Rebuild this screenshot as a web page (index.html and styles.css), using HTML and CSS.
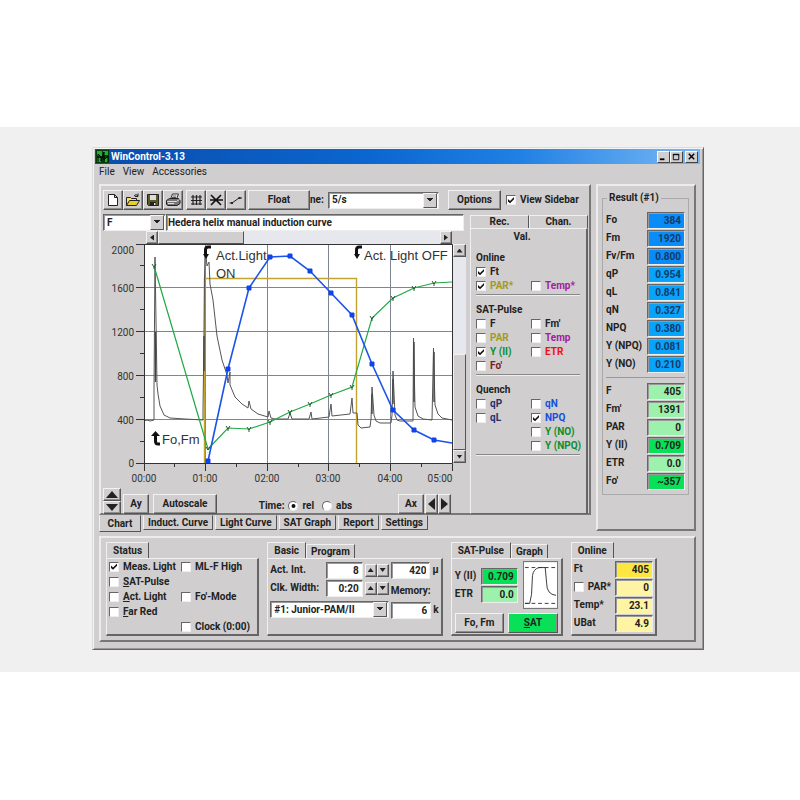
FILE: index.html
```
<!DOCTYPE html>
<html lang="en">
<head>
    <meta charset="UTF-8">
    <meta name="viewport" content="width=device-width, initial-scale=1.0">
    <title>WinControl-3.13</title>
    <link rel="stylesheet" href="styles.css">
</head>
<body>
<main class="stage">
<div class="window">
    <header class="titlebar">
        <svg class="app-icon" viewBox="0 0 13 13"><rect width="13" height="13" fill="#063b10"/><path d="M1 1h5v5h-5zM7 1h5v4h-5zM1 8h4v4h-4zM9 8h3v4h-3z" fill="#18b52c"/><path d="M2 12V4l3 3v4l3-9v8l4-4v6" fill="none" stroke="#000"/></svg>
        <h1>WinControl-3.13</h1>
        <div class="win-buttons">
            <button type="button" aria-label="Minimize"><svg viewBox="0 0 12 11"><path d="M2 8h5" stroke="#000" stroke-width="2"/></svg></button>
            <button type="button" aria-label="Maximize"><svg viewBox="0 0 12 11"><path d="M2.500 2.500h6v6h-6zM2 3h7" fill="none" stroke="#000"/></svg></button>
            <button type="button" aria-label="Close"><svg viewBox="0 0 12 11"><path d="M3 2l6 6M9 2l-6 6" stroke="#000" stroke-width="1.600"/></svg></button>
        </div>
    </header>
    <nav class="menu">
        <a href="#">File</a><a href="#">View</a><a href="#">Accessories</a>
    </nav>

    <div class="upper">
        <div class="main-col">
            <section class="panel chart-panel">
                <div class="toolbar">
                    <div class="tool-group">
                        <button type="button" class="tool" aria-label="New"><svg viewBox="0 0 16 16"><path d="M3.500 2.500h6l3 3v8h-9zM9.500 2.500v3h3" fill="#fff" stroke="#222"/></svg></button>
                        <button type="button" class="tool" aria-label="Open"><svg viewBox="0 0 16 16"><path d="M1.500 13.500v-8h4l1 1h5v2" fill="#f4e36b" stroke="#222"/><path d="M1.500 13.500l3-5h10l-3 5z" fill="#e8cf28" stroke="#222"/><path d="M9 4q2-3 4 0M13 1.500V4.500h-3" fill="none" stroke="#222"/></svg></button>
                        <button type="button" class="tool" aria-label="Save"><svg viewBox="0 0 16 16"><path d="M2.500 2.500h11v11h-10l-1-1z" fill="#5b5a28" stroke="#222"/><path d="M5 3h6v5h-6z" fill="#ddd"/><path d="M5 10h6v4h-6z" fill="#222"/><path d="M9 11h1.500v2H9z" fill="#ddd"/></svg></button>
                        <button type="button" class="tool" aria-label="Print"><svg viewBox="0 0 16 16"><path d="M5.500 7l2-5h6l-2 5" fill="#fff" stroke="#333"/><path d="M7.500 4h4M7 5.500h4" stroke="#555"/><path d="M1.500 8.500l3-2h9l1.500 2v3l-3 2h-9l-1.500-1z" fill="#777" stroke="#222"/><path d="M2 9.500h9.500l3-2M3 11.500h6" fill="none" stroke="#ddd"/></svg></button>
                    </div>
                    <div class="tool-group">
                        <button type="button" class="tool" aria-label="Grid"><svg viewBox="0 0 16 16"><path d="M5 3v10M8.500 3v10M12 3v10M3 5h11M3 8.500h11M3 12h11" stroke="#222" stroke-width="1.200"/></svg></button>
                        <button type="button" class="tool" aria-label="Markers"><svg viewBox="0 0 16 16"><path d="M2 8h13M3 3l5 5 5-5M3 13l5-5 5 5" fill="none" stroke="#111" stroke-width="1.600"/></svg></button>
                        <button type="button" class="tool" aria-label="Line"><svg viewBox="0 0 16 16"><path d="M1.500 11h2.500l7-5h3" fill="none" stroke="#222"/><path d="M3 10h2v2h-2zM10.500 5h2v2h-2z" fill="#222"/></svg></button>
                    </div>
                    <button type="button" class="btn float">Float</button>
                    <label class="rate-label" for="rate">ne:</label>
                    <span class="drop rate"><select id="rate"><option>5/s</option></select></span>
                    <button type="button" class="btn options">Options</button>
                    <label class="check"><input type="checkbox" checked>View Sidebar</label>
                </div>

                <div class="work">
                    <div class="chart-col">
                        <div class="comment-row">
                            <span class="drop"><select aria-label="Record"><option>F</option></select></span>
                            <input type="text" class="field comment" aria-label="Comment" value="Hedera helix manual induction curve">
                        </div>
                        <div class="hscroll">
                            <button type="button" class="arrow left" aria-label="Scroll left"></button>
                            <span class="thumb"></span>
                            <button type="button" class="arrow right" aria-label="Scroll right"></button>
                        </div>
                        <div class="plot-row">
                            <svg class="plot" viewBox="-41 0 350 243" role="img" aria-label="Induction curve">
                                <rect width="308" height="219" fill="#fff"/>
                                <path class="grid" d="M0 43.500h308M0 87.500h308M0 131.500h308M0 175.500h308M61.500 0v219M123.500 0v219M184.500 0v219M246.500 0v219"/>
                                <path class="actlight" d="M60.500 219V34.500H212.500V219"/>
                                <path class="ft" d="M0 177l3-1 3 1 4-1V144L11 13 13 141 14 150 16 162 20 171 26 174 41 175 59 176V166L60 92 60.500 34 61 8 62 12 63 22 65 18 66 40 69 56 73 92 78 116 83 131 84 139 86 128 86 141 91 153 98 160 104 164 105 157 107 165 114 170 124 173 125 167 127 174 131 175H144L146 169 148 175H165L167 168 168 175 185 173 187 160 188 172 206 170 208 154 209 169H213L214 181 217 184 226 183 227 175 228 143 230 171 232 177 236 179H247L248 171 249 127 251 171 253 176 256 177H269L269.500 94 271 163 274 172 279 175 288 176 289.500 104 291 161 294 170 298 174 308 176"/>
                                <path class="spikes" d="M11.500 88v50M60 92v35M228 150v20M249 135v25M270 98v60M290 108v50"/>
                                <path class="y2" d="M10 22L64 205 84 184 105 185 126 178 146 168 166 160 187 151 208 143 228 74 249 54 270 44 290 39 308 38"/>
                                <path class="y2-marks" d="M82 182l2 3 2-3M84 185v2M103 183l2 3 2-3M105 186v2M124 176l2 3 2-3M126 179v2M144 166l2 3 2-3M146 169v2M164 158l2 3 2-3M166 161v2M185 149l2 3 2-3M187 152v2M206 141l2 3 2-3M208 144v2M226 72l2 3 2-3M228 75v2M247 52l2 3 2-3M249 55v2M268 42l2 3 2-3M270 45v2M288 37l2 3 2-3M290 40v2M8 20l2 3 2-3M10 23v2M62 203l2 3 2-3"/>
                                <path class="npq" d="M64 217L84 125 105 44 126 13 146 12 166 27 187 49 208 71 228 120 249 166 270 186 290 196 308 199"/>
                                <path class="npq-marks" d="M62 215h4v4h-4zM82 123h4v4h-4zM103 42h4v4h-4zM124 11h4v4h-4zM144 10h4v4h-4zM164 25h4v4h-4zM185 47h4v4h-4zM206 69h4v4h-4zM226 118h4v4h-4zM247 164h4v4h-4zM268 184h4v4h-4zM288 194h4v4h-4z"/>
                                <path class="axis" d="M-8 .500H308.500V219M.500 0V227M-8 219.500H308.500V227M-8 43.500H0M-8 87.500H0M-8 131.500H0M-8 175.500H0M-4 21.500H0M-4 65.500H0M-4 109.500H0M-4 153.500H0M-4 197.500H0M61.500 219v8M123.500 219v8M184.500 219v8M246.500 219v8M30.500 219v4M92.500 219v4M154.500 219v4M215.500 219v4M277.500 219v4"/>
                                <g class="y-labels">
                                    <text x="-10" y="10">2000</text><text x="-10" y="48">1600</text><text x="-10" y="92">1200</text><text x="-10" y="136">800</text><text x="-10" y="180">400</text><text x="-10" y="223">0</text>
                                </g>
                                <g class="x-labels">
                                    <text x="0" y="238">00:00</text><text x="61" y="238">01:00</text><text x="123" y="238">02:00</text><text x="184" y="238">03:00</text><text x="246" y="238">04:00</text><text x="296" y="238">05:00</text>
                                </g>
                                <g class="notes">
                                    <text x="72" y="16">Act.Light</text><text x="72" y="34">ON</text><text x="220" y="16">Act. Light OFF</text><text x="18" y="200">Fo,Fm</text>
                                </g>
                                <g class="note-arrows">
                                    <path d="M67 3h-3q-2.500 0-2.500 3v6"/><path d="M59 10h6l-3 5z"/>
                                    <path d="M218 3h-3q-2.500 0-2.500 3v6"/><path d="M210 10h6l-3 5z"/>
                                    <path d="M16 200h-2q-2.500 0-2.500-3v-6"/><path d="M7 192h9l-4.500-5z"/>
                                </g>
                            </svg>
                            <div class="vscroll">
                                <button type="button" class="arrow up" aria-label="Scroll up"></button>
                                <span class="thumb"></span>
                                <button type="button" class="arrow down" aria-label="Scroll down"></button>
                            </div>
                        </div>
                        <div class="axis-row">
                            <div class="spin-big">
                                <button type="button" class="arrow up" aria-label="Y up"></button>
                                <button type="button" class="arrow down" aria-label="Y down"></button>
                            </div>
                            <button type="button" class="btn ay">Ay</button>
                            <button type="button" class="btn autoscale">Autoscale</button>
                            <div class="time">
                                <span>Time:</span>
                                <label class="check"><input type="radio" name="time" checked>rel</label>
                                <label class="check"><input type="radio" name="time">abs</label>
                            </div>
                            <button type="button" class="btn ax">Ax</button>
                            <button type="button" class="arrow big left" aria-label="X left"></button>
                            <button type="button" class="arrow big right" aria-label="X right"></button>
                        </div>
                    </div>

                    <aside class="sidebar">
                        <div class="side-tabs"><button type="button">Rec.</button><button type="button">Chan.</button></div>
                        <div class="side-body">
                            <h2 class="side-title">Val.</h2>
                            <section class="side-group">
                                <h3>Online</h3>
                                <div class="opts">
                                    <label class="check"><input type="checkbox" checked>Ft</label><span></span>
                                    <label class="check olive"><input type="checkbox" checked>PAR*</label>
                                    <label class="check purple"><input type="checkbox">Temp*</label>
                                </div>
                            </section>
                            <section class="side-group">
                                <h3>SAT-Pulse</h3>
                                <div class="opts">
                                    <label class="check"><input type="checkbox">F</label>
                                    <label class="check"><input type="checkbox">Fm'</label>
                                    <label class="check olive"><input type="checkbox">PAR</label>
                                    <label class="check purple"><input type="checkbox">Temp</label>
                                    <label class="check green"><input type="checkbox" checked>Y (II)</label>
                                    <label class="check red"><input type="checkbox">ETR</label>
                                    <label class="check maroon"><input type="checkbox">Fo'</label>
                                </div>
                            </section>
                            <section class="side-group">
                                <h3>Quench</h3>
                                <div class="opts">
                                    <label class="check navy"><input type="checkbox">qP</label>
                                    <label class="check blue"><input type="checkbox">qN</label>
                                    <label class="check navy"><input type="checkbox">qL</label>
                                    <label class="check blue"><input type="checkbox" checked>NPQ</label>
                                    <span></span><label class="check green"><input type="checkbox">Y (NO)</label>
                                    <span></span><label class="check green"><input type="checkbox">Y (NPQ)</label>
                                </div>
                            </section>
                        </div>
                    </aside>
                </div>
            </section>
            <nav class="page-tabs">
                <button type="button" class="active">Chart</button>
                <button type="button">Induct. Curve</button>
                <button type="button">Light Curve</button>
                <button type="button">SAT Graph</button>
                <button type="button">Report</button>
                <button type="button">Settings</button>
            </nav>
        </div>

        <section class="panel result-panel">
            <fieldset>
                <legend>Result (#1)</legend>
                <div class="result-rows">
                    <label for="fo">Fo</label><input id="fo" class="field azure" value="384" readonly>
                    <label for="fm">Fm</label><input id="fm" class="field azure" value="1920" readonly>
                    <label for="fvfm">Fv/Fm</label><input id="fvfm" class="field azure" value="0.800" readonly>
                    <label for="qp">qP</label><input id="qp" class="field sky" value="0.954" readonly>
                    <label for="ql">qL</label><input id="ql" class="field sky" value="0.841" readonly>
                    <label for="qn">qN</label><input id="qn" class="field sky" value="0.327" readonly>
                    <label for="npq">NPQ</label><input id="npq" class="field sky" value="0.380" readonly>
                    <label for="ynpq">Y (NPQ)</label><input id="ynpq" class="field sky" value="0.081" readonly>
                    <label for="yno">Y (NO)</label><input id="yno" class="field sky" value="0.210" readonly>
                </div>
                <hr>
                <div class="result-rows">
                    <label for="f">F</label><input id="f" class="field mint" value="405" readonly>
                    <label for="fm2">Fm'</label><input id="fm2" class="field mint" value="1391" readonly>
                    <label for="par">PAR</label><input id="par" class="field mint" value="0" readonly>
                    <label for="yii">Y (II)</label><input id="yii" class="field lime" value="0.709" readonly>
                    <label for="etr">ETR</label><input id="etr" class="field mint" value="0.0" readonly>
                    <label for="fo2">Fo'</label><input id="fo2" class="field lime" value="~357" readonly>
                </div>
            </fieldset>
        </section>
    </div>

    <section class="panel lower">
        <div class="box status">
            <div class="box-tabs"><button type="button" class="active">Status</button></div>
            <div class="box-body status-grid">
                <label class="check"><input type="checkbox" checked>Meas. Light</label>
                <label class="check"><input type="checkbox">ML-F High</label>
                <label class="check"><input type="checkbox"><span><u>S</u>AT-Pulse</span></label><span></span>
                <label class="check"><input type="checkbox"><span><u>A</u>ct. Light</span></label>
                <label class="check"><input type="checkbox">Fo'-Mode</label>
                <label class="check"><input type="checkbox"><span><u>F</u>ar Red</span></label><span></span>
                <span></span><label class="check"><input type="checkbox">Clock (0:00)</label>
            </div>
        </div>

        <div class="box basic">
            <div class="box-tabs"><button type="button" class="active">Basic</button><button type="button">Program</button></div>
            <div class="box-body basic-body">
                <div class="basic-left">
                    <div class="line"><label for="actint">Act. Int.</label><input id="actint" class="field" value="8"><button type="button" class="arrow up" aria-label="More"></button><button type="button" class="arrow down" aria-label="Less"></button></div>
                    <div class="line"><label for="clk">Clk. Width:</label><input id="clk" class="field" value="0:20"><button type="button" class="arrow up" aria-label="Wider"></button><button type="button" class="arrow down" aria-label="Narrower"></button></div>
                    <span class="drop device"><select aria-label="Device"><option>#1: Junior-PAM/II</option></select></span>
                </div>
                <div class="basic-right">
                    <div class="line"><input id="par-out" class="field" value="420" readonly><label for="par-out">µ</label></div>
                    <label class="memory" for="mem">Memory:</label>
                    <div class="line mem"><input id="mem" class="field" value="6" readonly><span>k</span></div>
                </div>
            </div>
        </div>

        <div class="box pulse">
            <div class="box-tabs"><button type="button" class="active">SAT-Pulse</button><button type="button">Graph</button></div>
            <div class="box-body">
                <div class="pulse-top">
                    <div class="pulse-values">
                        <label for="p-yii">Y (II)</label><input id="p-yii" class="field lime" value="0.709" readonly>
                        <label for="p-etr">ETR</label><input id="p-etr" class="field mint" value="0.0" readonly>
                    </div>
                    <svg class="pulse-graph" viewBox="0 0 35 48"><rect width="35" height="48" fill="#fff"/><path d="M1 5.500h33M1 43.500h33" stroke="#333" stroke-dasharray="4 3"/><path d="M1 43.500H6L8 34 9 14Q10 7 16 5.500H22.500L24 22Q24 34 34 35" fill="none" stroke="#333"/></svg>
                </div>
                <div class="pulse-buttons">
                    <button type="button" class="btn">Fo, Fm</button>
                    <button type="button" class="btn sat"><u>S</u>AT</button>
                </div>
            </div>
        </div>

        <div class="box online">
            <div class="box-tabs"><button type="button" class="active">Online</button></div>
            <div class="box-body online-grid">
                <label for="o-ft">Ft</label><input id="o-ft" class="field gold" value="405" readonly>
                <label class="check"><input type="checkbox">PAR*</label><input class="field cream" aria-label="PAR" value="0" readonly>
                <label for="o-temp">Temp*</label><input id="o-temp" class="field cream" value="23.1" readonly>
                <label for="o-bat">UBat</label><input id="o-bat" class="field cream" value="4.9" readonly>
            </div>
        </div>
    </section>
</div>
</main>
</body>
</html>
```
FILE: styles.css
```
* {
    box-sizing: border-box;
}
body {
    margin: 0;
    padding: 127px 0 128px;
    background: #fff;
    color: #222;
    font: bold 10px/12px Roboto, "Noto Sans", sans-serif;
}
button, input, select {
    font: inherit;
    color: inherit;
    margin: 0;
    padding: 0;
    border-radius: 0;
    min-width: 0;
}
h1, h2, h3 {
    margin: 0;
    font-size: inherit;
}
.stage {
    padding: 20px 96px 22px 92px;
    background: #f0f0f0;
}
.window {
    background: #d0cece;
    border: 1px solid;
    border-color: #dcdcdc #666 #666 #dcdcdc;
    box-shadow: inset 1px 1px #f4f4f4, inset -1px -1px #999;
    padding: 1px 3px 7px 2px;
}

/* title bar and menu */
.titlebar {
    display: flex;
    align-items: center;
    height: 15px;
    padding: 0 2px 0 1px;
    gap: 2px;
    color: #fff;
    background: linear-gradient(90deg, #0a4cac, #0b66cf 45%, #2080e4 70%, #78b8f4);
}
.app-icon {
    width: 13px;
    height: 13px;
}
.titlebar h1 {
    flex: 1;
}
.win-buttons {
    display: flex;
}
.win-buttons button {
    width: 13px;
    height: 12px;
    background: #d0cece;
    border: 1px solid;
    border-color: #fff #444 #444 #fff;
}
.win-buttons button:last-child {
    margin-left: 2px;
}
.win-buttons svg {
    display: block;
    width: 100%;
    height: 100%;
}
.menu {
    display: flex;
    gap: 8px;
    height: 18px;
    padding: 2px 4px;
    font-weight: normal;
}
.menu a {
    color: inherit;
    text-decoration: none;
}

/* shared pieces */
.panel {
    border: 2px solid;
    border-color: #ececec #777 #777 #ececec;
}
.btn, .tool, .arrow {
    background: #d0cece;
    border: 1px solid;
    border-color: #f2f2f2 #555 #555 #f2f2f2;
    box-shadow: inset -1px -1px #8e8e8e;
}
.field, .drop {
    background: #fff;
    border: 1px solid;
    border-color: #666 #eee #eee #666;
    box-shadow: inset 1px 1px #999;
}
.field {
    width: 100%;
    height: 17px;
    padding: 0 3px;
    text-align: right;
}
.drop {
    display: grid;
    height: 17px;
    align-items: center;
}
.drop select {
    grid-area: 1 / 1;
    width: 100%;
    height: 100%;
    padding-left: 3px;
    background: none;
    border: 0;
    appearance: none;
}
.drop::after {
    content: "";
    grid-area: 1 / 1;
    justify-self: end;
    width: 12px;
    height: 13px;
    margin-right: 1px;
    pointer-events: none;
    background: linear-gradient(#222, #222) 50% 4px / 6px 1px no-repeat, linear-gradient(#222, #222) 50% 5px / 4px 1px no-repeat, linear-gradient(#222, #222) 50% 6px / 2px 1px no-repeat, #d0cece;
    border: 1px solid;
    border-color: #f2f2f2 #555 #555 #f2f2f2;
}
.check {
    display: flex;
    align-items: center;
    gap: 4px;
    white-space: nowrap;
}
.check input {
    flex: none;
    width: 10px;
    height: 10px;
    background: #fff;
    border: 1px solid;
    border-color: #666 #eee #eee #666;
    appearance: none;
}
.check input[type="radio"] {
    border-radius: 50%;
}
.check input:checked::before {
    content: "";
    display: block;
    width: 8px;
    height: 8px;
    background: #111;
    clip-path: polygon(12% 38%, 38% 62%, 88% 12%, 88% 42%, 38% 92%, 12% 68%);
}
.check input[type="radio"]:checked::before {
    clip-path: circle(2px);
}
.arrow {
    flex: none;
    display: flex;
    align-items: center;
    justify-content: center;
    width: 12px;
    height: 13px;
}
.arrow::before {
    content: "";
    width: 6px;
    height: 4px;
    background: #222;
    clip-path: polygon(0 0, 100% 0, 50% 100%);
}
.arrow.up::before {
    clip-path: polygon(50% 0, 100% 100%, 0 100%);
}
.arrow.left::before, .arrow.right::before {
    width: 4px;
    height: 6px;
}
.arrow.left::before {
    clip-path: polygon(100% 0, 100% 100%, 0 50%);
}
.arrow.right::before {
    clip-path: polygon(0 0, 100% 50%, 0 100%);
}
.thumb {
    background: #d0cece;
    border: 1px solid;
    border-color: #f2f2f2 #555 #555 #f2f2f2;
}
.olive { color: #a39a22; }
.purple { color: #a020a0; }
.green { color: #0a8f2c; }
.red { color: #f01010; }
.maroon { color: #7a1c1c; }
.navy { color: #24306c; }
.blue { color: #1450e0; }
.azure { background: #0a8cf8; color: #123a66; }
.sky { background: #08a4fb; color: #123a66; }
.mint { background: #9cf2ac; }
.lime { background: #08e058; }
.gold { background: #fde640; }
.cream { background: #fff4a4; }

/* upper half */
.upper {
    display: flex;
    gap: 5px;
    padding: 2px 4px 0;
}
.main-col {
    flex: 1;
    min-width: 0;
}
.chart-panel {
    height: 331px;
    padding: 4px 1px 0 2px;
}
.toolbar {
    display: flex;
    align-items: center;
    height: 20px;
}
.tool-group {
    display: flex;
    margin-right: 3px;
}
.tool {
    width: 20px;
    height: 20px;
}
.tool-group + .tool-group {
    margin-right: 2px;
}
.tool svg {
    display: block;
    width: 16px;
    height: 16px;
    margin: 0 auto;
}
.btn {
    height: 20px;
    white-space: nowrap;
}
.float {
    width: 62px;
}
.rate-label {
    width: 18px;
}
.rate {
    flex: 1;
    max-width: 200px;
    margin-right: 9px;
}
.options {
    width: 53px;
    margin-right: 5px;
}
.toolbar .check {
    width: 82px;
}
.work {
    display: flex;
    gap: 4px;
    padding-top: 4px;
}
.chart-col {
    flex: 1;
    min-width: 0;
}
.comment-row {
    display: grid;
    grid-template-columns: 63px 1fr;
    padding-right: 2px;
}
.comment {
    padding: 0 1px;
    text-align: left;
}
.hscroll {
    display: flex;
    height: 13px;
    margin: 0 14px 0 43px;
    background: #e6e8ee;
}
.hscroll .thumb {
    width: 28%;
    margin-right: auto;
}
.plot-row {
    display: flex;
}
.plot {
    flex: 1;
    min-width: 0;
    display: block;
}
.plot path {
    fill: none;
}
.plot .grid { stroke: #7e8696; }
.plot .axis { stroke: #333; }
.plot .actlight { stroke: #c4a430; stroke-width: 1.4; }
.plot .ft { stroke: #555; }
.plot .spikes { stroke: #444; stroke-width: 1.4; }
.plot .y2 { stroke: #22a844; stroke-width: 1.2; }
.plot .y2-marks { stroke: #1c5a2c; }
.plot .npq { stroke: #1a54e8; stroke-width: 1.6; }
.plot .npq-marks { fill: #1044e8; stroke: #1044e8; }
.plot text {
    fill: #333;
    font-weight: normal;
    font-size: 10px;
}
.y-labels text { text-anchor: end; }
.x-labels text { text-anchor: middle; }
.plot .notes text {
    font-family: "Liberation Sans", Arial, sans-serif;
    font-size: 13px;
}
.plot .note-arrows path {
    stroke: #111;
    stroke-width: 3;
}
.plot .note-arrows path:nth-child(even) {
    fill: #111;
    stroke: none;
}
.vscroll {
    display: flex;
    flex-direction: column;
    width: 13px;
    margin-bottom: 24px;
    background: #e6e8ee;
}
.vscroll .arrow {
    width: 13px;
}
.vscroll .thumb {
    height: 44%;
    margin-top: auto;
}
.axis-row {
    display: flex;
    align-items: flex-end;
    height: 27px;
    padding-right: 15px;
}
.spin-big {
    margin-right: 2px;
}
.spin-big .arrow {
    width: 18px;
}
.spin-big .arrow::before {
    width: 12px;
    height: 7px;
}
.arrow.big {
    width: 13px;
    height: 20px;
}
.arrow.big::before {
    width: 7px;
    height: 12px;
}
.ay {
    width: 26px;
    margin-right: 4px;
}
.autoscale {
    width: 64px;
}
.time {
    flex: 1;
    display: flex;
    justify-content: center;
    align-items: center;
    gap: 4px;
    height: 16px;
}
.time .check {
    margin-right: 4px;
}
.ax {
    width: 26px;
    margin-right: 1px;
}

/* sidebar */
.sidebar {
    width: 118px;
    margin-top: 1px;
}
.side-tabs {
    display: flex;
    height: 13px;
}
.side-tabs button {
    flex: 1;
    background: none;
    border: 1px solid;
    border-color: #f0f0f0 #555 transparent #f0f0f0;
    border-bottom: 0;
}
.side-body {
    height: 286px;
    padding: 2px 6px 0 5px;
    border: 1px solid;
    border-color: #f0f0f0 #666 #666 #f0f0f0;
    border-right-width: 2px;
}
.side-title {
    text-align: center;
    padding-right: 12px;
}
.side-group {
    padding: 8px 0 1px;
    border-bottom: 1px solid #888;
    box-shadow: 0 1px #eee;
}
.side-group h3 {
    line-height: 14px;
}
.opts {
    display: grid;
    grid-template-columns: 55px 1fr;
    grid-auto-rows: 14px;
}

/* tabs below the chart */
.page-tabs {
    display: flex;
    gap: 2px;
    align-items: flex-start;
    height: 17px;
}
.page-tabs button {
    height: 15px;
    padding: 0 4px;
    background: #d0cece;
    border: 1px solid;
    border-color: transparent #555 #555 #f0f0f0;
    white-space: nowrap;
}
.page-tabs .active {
    width: 42px;
    height: 17px;
}

/* results */
.result-panel {
    width: 100px;
    height: 347px;
    padding: 6px 5px 0 4px;
}
.result-panel fieldset {
    min-width: 0;
    margin: 0;
    padding: 7px 3px 4px;
    border: 1px solid #aaa;
}
.result-panel legend {
    margin-left: 1px;
    padding: 0 2px;
    white-space: nowrap;
}
.result-rows {
    display: grid;
    grid-template-columns: 1fr 38px;
    grid-auto-rows: 18px;
    align-items: center;
    white-space: nowrap;
}
.result-panel hr {
    margin: 4px 0;
    border: 0;
    border-top: 1px solid #999;
}

/* lower half */
.lower {
    display: flex;
    gap: 8px;
    height: 106px;
    margin: 4px 4px 0;
    padding: 4px 37px 4px 5px;
}
.box {
    display: flex;
    flex-direction: column;
}
.box-tabs {
    display: flex;
    align-items: flex-end;
    height: 16px;
}
.box-tabs button {
    height: 14px;
    padding: 0 4px;
    background: #d0cece;
    border: 1px solid;
    border-color: #f0f0f0 #555 transparent #f0f0f0;
    border-bottom: 0;
    white-space: nowrap;
}
.box-tabs .active {
    height: 16px;
    padding: 0 6px;
}
.box-body {
    flex: 1;
    padding: 1px 3px;
    border: 1px solid;
    border-color: #f0f0f0 #666 #666 #f0f0f0;
    border-right-width: 2px;
    border-bottom-width: 2px;
}
.status { flex: 153; }
.basic { flex: 175; }
.pulse { flex: 112; }
.online { flex: 86; }
.status-grid {
    display: grid;
    grid-template-columns: 72px 1fr;
    grid-auto-rows: 15px;
    padding: 0 2px;
}
.line {
    display: flex;
    align-items: center;
    height: 18px;
    white-space: nowrap;
}
.basic-body {
    display: flex;
    gap: 2px;
    padding: 2px 2px 0;
}
.basic-left {
    flex: 1;
}
.basic-left label {
    width: 56px;
    flex: none;
}
.basic-left .field {
    margin-right: 2px;
}
.device {
    margin-top: 4px;
}
.basic-right {
    width: 48px;
}
.basic-right .line {
    gap: 2px;
}
.memory {
    display: block;
    height: 22px;
    line-height: 24px;
}
.pulse-top {
    display: flex;
    gap: 5px;
    padding-top: 1px;
}
.pulse-values {
    flex: 1;
    display: grid;
    grid-template-columns: 1fr 37px;
    align-content: center;
    align-items: center;
    gap: 1px 0;
    white-space: nowrap;
}
.pulse-graph {
    width: 35px;
    height: 48px;
    border: 1px solid #777;
}
.pulse-buttons {
    display: grid;
    grid-template-columns: 1fr 1fr;
    gap: 4px;
    padding-top: 4px;
}
.pulse-buttons .sat {
    background: #08e058;
}
.online-grid {
    display: grid;
    grid-template-columns: 1fr 38px;
    grid-auto-rows: 18px;
    align-items: center;
    padding: 1px 2px;
}
```
